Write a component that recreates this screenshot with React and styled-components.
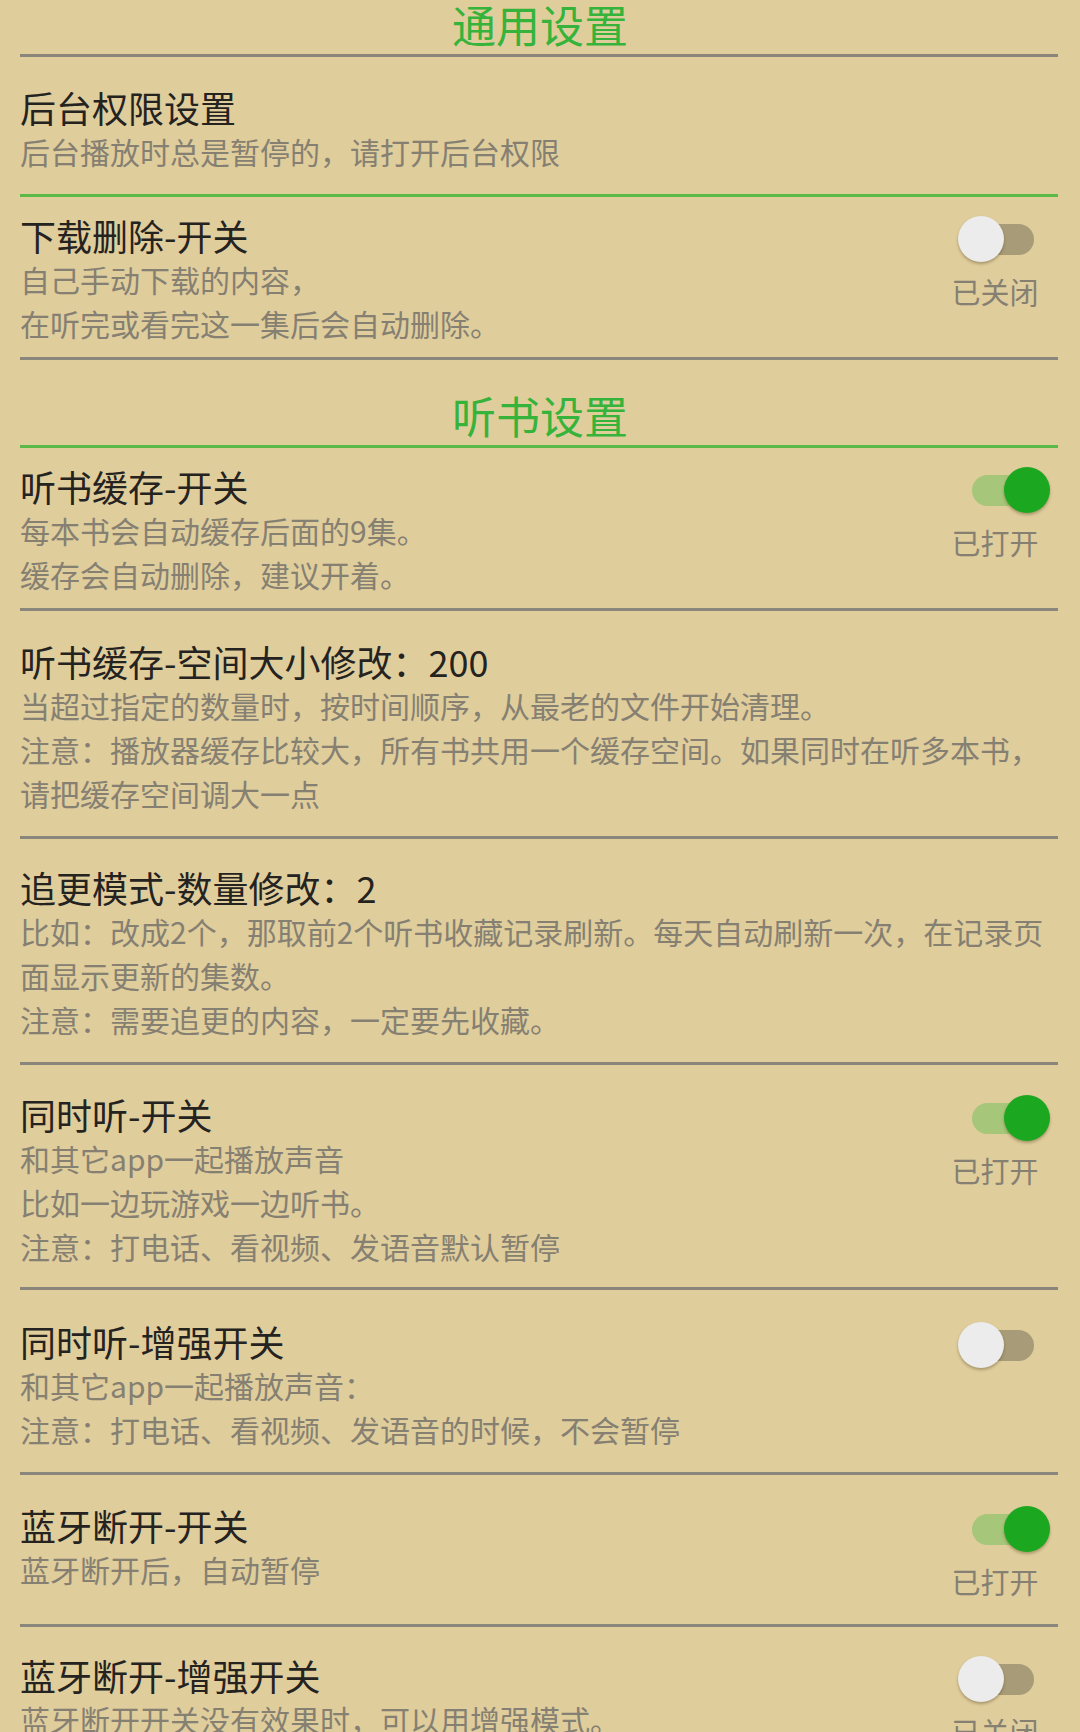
import React from "react";
import styled, { createGlobalStyle } from "styled-components";

const GlobalStyle = createGlobalStyle`
  html, body {
    margin: 0;
    padding: 0;
    background: #e0cd9c;
  }
  body {
    font-family: "Noto Sans CJK SC", "Noto Sans", sans-serif;
  }
`;

const sections = [
  {
    title: "通用设置",
    first: true,
    items: [
      {
        title: "后台权限设置",
        desc: ["后台播放时总是暂停的，请打开后台权限"],
        line: "green",
      },
      {
        title: "下载删除-开关",
        desc: ["自己手动下载的内容，", "在听完或看完这一集后会自动删除。"],
        toggle: false,
        status: "已关闭",
        pad: "16px 0 12px",
      },
    ],
  },
  {
    title: "听书设置",
    items: [
      {
        title: "听书缓存-开关",
        desc: ["每本书会自动缓存后面的9集。", "缓存会自动删除，建议开着。"],
        toggle: true,
        status: "已打开",
        pad: "16px 0 12px",
      },
      {
        title: "听书缓存-空间大小修改：200",
        desc: [
          "当超过指定的数量时，按时间顺序，从最老的文件开始清理。",
          "注意：播放器缓存比较大，所有书共用一个缓存空间。如果同时在听多本书，",
          "请把缓存空间调大一点",
        ],
      },
      {
        title: "追更模式-数量修改：2",
        desc: [
          "比如：改成2个，那取前2个听书收藏记录刷新。每天自动刷新一次，在记录页",
          "面显示更新的集数。",
          "注意：需要追更的内容，一定要先收藏。",
        ],
        pad: "26px 0 21px",
      },
      {
        title: "同时听-开关",
        desc: [
          "和其它app一起播放声音",
          "比如一边玩游戏一边听书。",
          "注意：打电话、看视频、发语音默认暂停",
        ],
        toggle: true,
        status: "已打开",
        pad: "27px 0 19px",
      },
      {
        title: "同时听-增强开关",
        desc: ["和其它app一起播放声音：", "注意：打电话、看视频、发语音的时候，不会暂停"],
        toggle: false,
        pad: "29px 0 21px",
      },
      {
        title: "蓝牙断开-开关",
        desc: ["蓝牙断开后，自动暂停"],
        toggle: true,
        status: "已打开",
        pad: "28px 0 23px",
      },
      {
        title: "蓝牙断开-增强开关",
        desc: ["蓝牙断开开关没有效果时，可以用增强模式。"],
        toggle: false,
        status: "已关闭",
        pad: "26px 0 21px",
      },
    ],
  },
];

const App = () => {
  return (
    <Page>
      <GlobalStyle />
      {sections.map((sec) => (
        <Section key={sec.title}>
          <SectionTitle first={sec.first}>{sec.title}</SectionTitle>
          <Divider color={sec.first ? "gray" : "green"} />
          {sec.items.map((item) => (
            <React.Fragment key={item.title}>
              <Row pad={item.pad}>
                <TextCol>
                  <ItemTitle>{item.title}</ItemTitle>
                  {item.desc.map((d, i) => (
                    <ItemDesc key={i}>{d}</ItemDesc>
                  ))}
                </TextCol>
                {item.toggle !== undefined && (
                  <RightCol>
                    <Switch on={item.toggle}>
                      <Track on={item.toggle} />
                      <Thumb on={item.toggle} />
                    </Switch>
                    {item.status && <Status>{item.status}</Status>}
                  </RightCol>
                )}
              </Row>
              <Divider color={item.line || "gray"} />
            </React.Fragment>
          ))}
        </Section>
      ))}
    </Page>
  );
};

const Page = styled.div`
  padding: 0 22px 0 20px;
  height: 1732px;
  overflow: hidden;
  box-sizing: border-box;
`;

const Section = styled.div`
  display: flex;
  flex-direction: column;
`;

const SectionTitle = styled.div`
  margin-top: ${(p) => (p.first ? "0" : "31px")};
  margin-bottom: 6px;
  text-align: center;
  font-size: 44px;
  line-height: 48px;
  color: #36b33a;
  padding-left: 2px;
`;

const Divider = styled.div`
  height: 3px;
  background: ${(p) => (p.color === "green" ? "#5ab947" : "#8a867b")};
`;

const Row = styled.div`
  display: flex;
  align-items: flex-start;
  padding: ${(p) => p.pad || "28px 0 21px"};
`;

const TextCol = styled.div`
  flex: 1;
  min-width: 0;
`;

const ItemTitle = styled.div`
  font-size: 36px;
  line-height: 44px;
  color: #25231f;
  white-space: nowrap;
`;

const ItemDesc = styled.div`
  font-size: 30px;
  line-height: 44px;
  color: #858072;
  white-space: nowrap;
`;

const RightCol = styled.div`
  width: 100px;
  margin-right: 8px;
  padding-top: 3px;
  display: flex;
  flex-direction: column;
  align-items: center;
  flex-shrink: 0;
`;

const Switch = styled.div`
  position: relative;
  width: 92px;
  height: 46px;
  margin-left: 8px;
`;

const Track = styled.div`
  position: absolute;
  left: 14px;
  top: 8px;
  width: 62px;
  height: 31px;
  border-radius: 16px;
  background: ${(p) => (p.on ? "#a6c679" : "#a89b77")};
`;

const Thumb = styled.div`
  position: absolute;
  top: 0;
  left: ${(p) => (p.on ? "46px" : "0")};
  width: 46px;
  height: 46px;
  border-radius: 50%;
  background: ${(p) => (p.on ? "#1ba71f" : "#ececec")};
  box-shadow: 0 2px 3px rgba(70, 55, 20, 0.35);
`;

const Status = styled.div`
  margin-top: 9px;
  margin-right: 10px;
  font-size: 29px;
  line-height: 40px;
  color: #858072;
`;

export default App;
